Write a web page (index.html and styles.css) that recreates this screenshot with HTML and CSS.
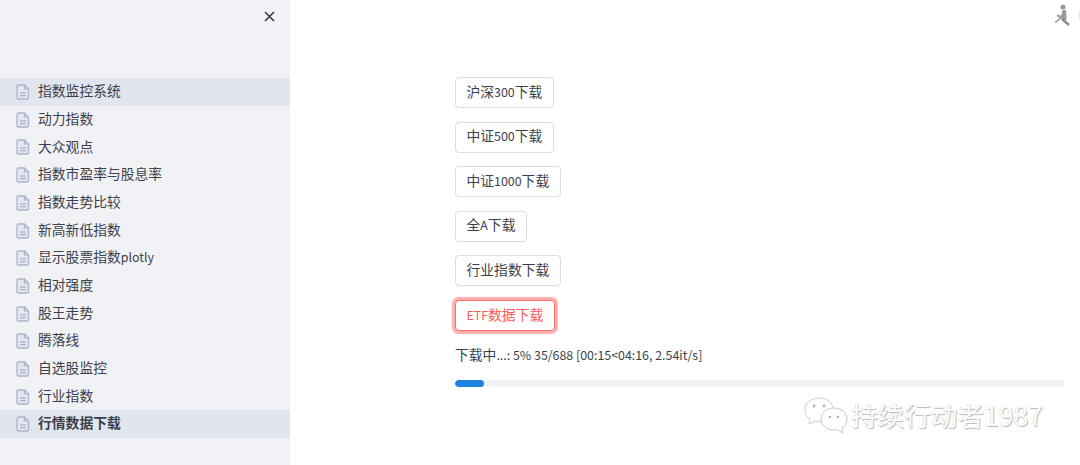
FILE: index.html
```html
<!DOCTYPE html>
<html lang="zh">
<head>
  <meta charset="UTF-8">
  <title>行情数据下载</title>
  <meta name="viewport" content="width=device-width, initial-scale=1.0">
  <link rel="stylesheet" href="styles.css">
</head>
<body>
  <svg width="0" height="0" class="defs">
    <symbol id="doc" viewBox="0 0 14 16">
      <path d="M2.500 1h6L12.500 5v8.500a1.500 1.500 0 0 1-1.500 1.500H2.500A1.500 1.500 0 0 1 1 13.500V2.500A1.500 1.500 0 0 1 2.500 1z" fill="#e4e7ef" stroke="#abb5c9" stroke-width="1.300"/>
      <path d="M8.500 1v4h4" fill="none" stroke="#abb5c9" stroke-width="1.200"/>
      <path d="M4 9h6M4 11.800h6" stroke="#98a4bc" stroke-width="1.100"/>
    </symbol>
  </svg>

  <aside class="sidebar">
    <div class="close-row">
      <svg class="close-icon" width="11" height="11" viewBox="0 0 11 11"><path d="M1 1l9 9M10 1l-9 9" stroke="#31333f" stroke-width="1.500"/></svg>
    </div>
    <ul class="nav">
      <li class="nav-item current"><svg class="doc"><use href="#doc"/></svg>指数监控系统</li>
      <li class="nav-item"><svg class="doc"><use href="#doc"/></svg>动力指数</li>
      <li class="nav-item"><svg class="doc"><use href="#doc"/></svg>大众观点</li>
      <li class="nav-item"><svg class="doc"><use href="#doc"/></svg>指数市盈率与股息率</li>
      <li class="nav-item"><svg class="doc"><use href="#doc"/></svg>指数走势比较</li>
      <li class="nav-item"><svg class="doc"><use href="#doc"/></svg>新高新低指数</li>
      <li class="nav-item"><svg class="doc"><use href="#doc"/></svg><span>显示股票指数<span class="lat">plotly</span></span></li>
      <li class="nav-item"><svg class="doc"><use href="#doc"/></svg>相对强度</li>
      <li class="nav-item"><svg class="doc"><use href="#doc"/></svg>股王走势</li>
      <li class="nav-item"><svg class="doc"><use href="#doc"/></svg>腾落线</li>
      <li class="nav-item"><svg class="doc"><use href="#doc"/></svg>自选股监控</li>
      <li class="nav-item"><svg class="doc"><use href="#doc"/></svg>行业指数</li>
      <li class="nav-item current active"><svg class="doc"><use href="#doc"/></svg>行情数据下载</li>
    </ul>
  </aside>

  <main class="main">
    <button class="btn">沪深<span class="lat">300</span>下载</button>
    <button class="btn">中证<span class="lat">500</span>下载</button>
    <button class="btn">中证<span class="lat">1000</span>下载</button>
    <button class="btn">全<span class="lat">A</span>下载</button>
    <button class="btn">行业指数下载</button>
    <button class="btn focus"><span class="lat">ETF</span>数据下载</button>
    <p class="progress-label">下载中<span class="lat">...: 5% 35/688 [00:15&lt;04:16, 2.54it/s]</span></p>
    <div class="progress"><div class="progress-bar" style="width:4.7%"></div></div>
  </main>

  <svg class="running" width="28" height="30" viewBox="0 0 28 30">
    <circle cx="11" cy="7" r="2.600" fill="#9a9a9a"/>
    <path d="M10 10.500l4-.5.700 10-4.500-.5-5.700-3.500 1-1.500 3.200 1.200 1.300-2z" fill="#9c9c9c"/>
    <path d="M10 19l7 6" stroke="#8c8c8c" stroke-width="2.600" fill="none"/>
    <path d="M9 18l-6 4.500" stroke="#a8a8a8" stroke-width="1.600" fill="none"/>
    <rect x="27" y="11" width="1" height="9" fill="#e4e4e4"/>
  </svg>

  <div class="watermark">
    <svg width="46" height="38" viewBox="0 0 46 38" class="wx">
      <path d="M16 2C8 2 2 7 2 14c0 4 2 7 5 9l-1 5 6-3c1 .3 3 .5 4 .500 8 0 14-5 14-12S24 2 16 2z" fill="#fff" stroke="#cdcdcd" stroke-width="1"/>
      <circle cx="11" cy="10" r="1.400" fill="#b4b4b4"/><circle cx="21" cy="10" r="1.400" fill="#b4b4b4"/>
      <path d="M31 12c-7 0-13 5-13 11s6 11 13 11c1 0 2 0 3-.300l6 3.300-1-5c3-2 5-5 5-9 0-6-6-11-13-11z" fill="#fff" stroke="#c8c8c8" stroke-width="1"/>
      <circle cx="27" cy="21" r="1.200" fill="#b4b4b4"/><circle cx="35" cy="21" r="1.200" fill="#b4b4b4"/>
    </svg>
    <span class="wx-text">持续行动者<span class="wx-num">1987</span></span>
  </div>
</body>
</html>
```

FILE: styles.css
```css
* { margin: 0; padding: 0; box-sizing: border-box; }
html, body { height: 100%; overflow: hidden; }
body {
  display: flex;
  background: #fff;
  color: #3d3f4a;
  font-family: "Noto Sans CJK SC", "Noto Sans", sans-serif;
  font-size: 13.800px;
}
.defs { position: absolute; }
.lat { font-size: 12.400px; }

.sidebar {
  width: 290px;
  flex: none;
  background: #f0f2f6;
}
.close-row {
  height: 78px;
  display: flex;
  justify-content: flex-end;
  padding: 11px 15px 0 0;
}
.close-icon { display: block; }
.nav { list-style: none; }
.nav-item {
  height: 27.700px;
  display: flex;
  align-items: center;
  padding: 0 0 1.500px 16px;
  line-height: 1;
}
.nav-item.current { background: #e1e5ed; }
.nav-item.active { font-weight: 700; }
.doc {
  width: 14px;
  height: 16px;
  margin: 2px 8px 0 0;
  flex: none;
}

.main {
  flex: 1;
  padding: 77px 16px 0 165px;
  display: flex;
  flex-direction: column;
  align-items: flex-start;
}
.btn {
  height: 31px;
  padding: 0 10.500px 2px;
  margin-bottom: 13.600px;
  background: #fff;
  border: 1px solid #dcdde1;
  border-radius: 4px;
  color: #3d3f4a;
  font: inherit;
  line-height: 1;
}
.btn.focus {
  color: #ff5a5a;
  border-color: #ff6e6e;
  box-shadow: 0 0 1px 2.500px rgba(255, 75, 75, .45);
}
.progress-label {
  margin-top: -1px;
  line-height: 20px;
}
.progress {
  width: 100%;
  height: 7px;
  margin-top: 15px;
  background: #f0f2f6;
  border-radius: 4px;
  overflow: hidden;
}
.progress-bar {
  height: 100%;
  background: #1c83e1;
  border-radius: 4px;
}

.running {
  position: absolute;
  top: 0;
  left: 1052px;
}
.watermark {
  position: absolute;
  left: 803px;
  top: 396px;
  display: flex;
  align-items: center;
  gap: 2px;
}
.wx-text {
  font-size: 26.600px;
  color: #fdfdfd;
  text-shadow: 1px 1px 1px #b8b8b8, -0.500px -0.500px 0 #d6d6d6;
  white-space: nowrap;
  line-height: 38px;
}
.wx-num { font-size: 26.500px; }
```
